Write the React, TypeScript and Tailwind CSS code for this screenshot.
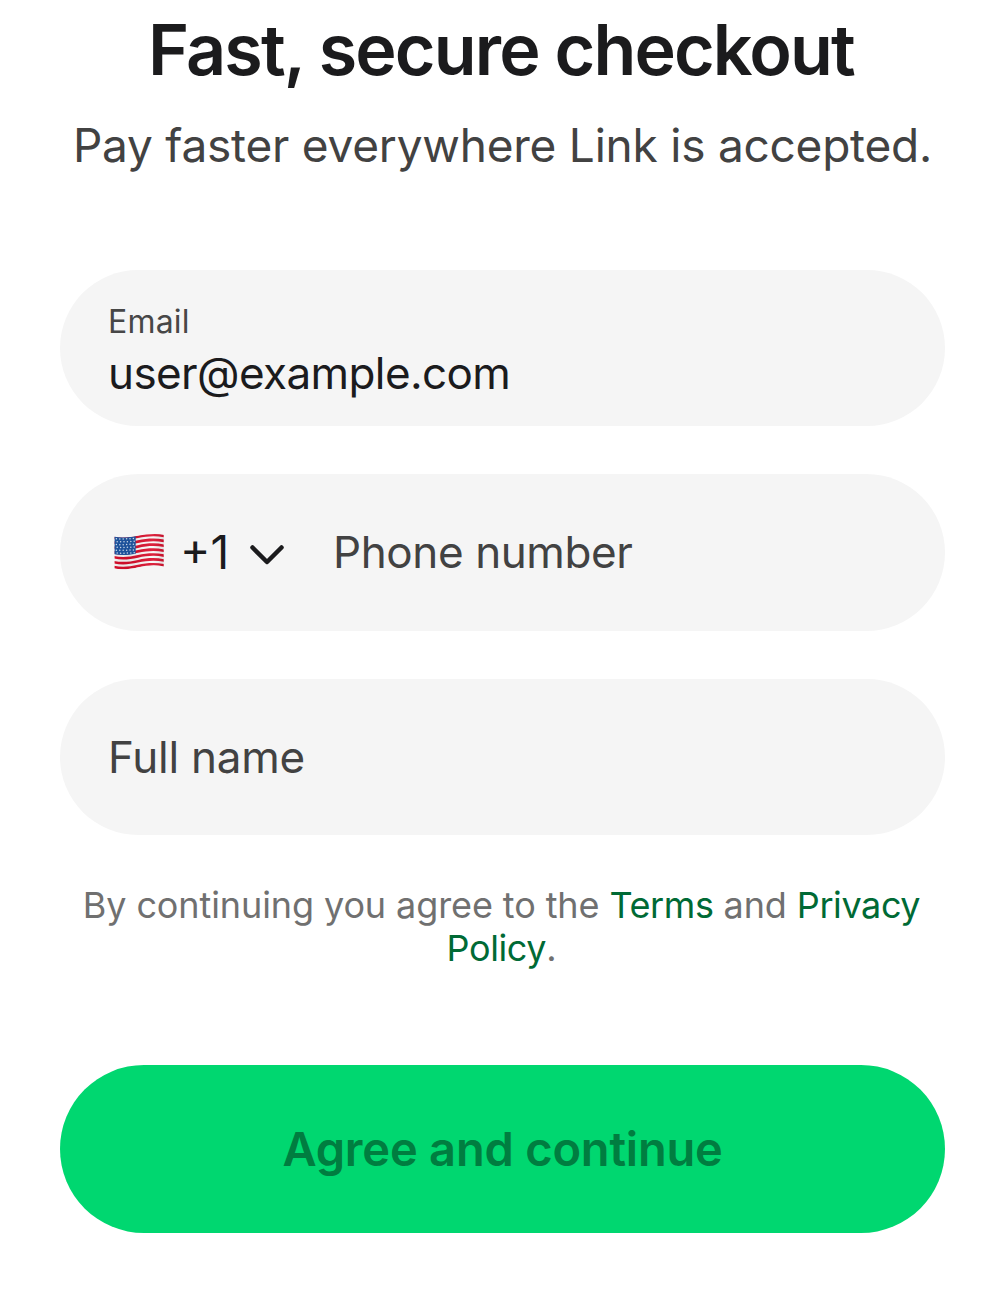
import React from "react";

const stripes = [0, 1, 2, 3, 4, 5, 6];
const six = [0, 1, 2, 3, 4, 5];

function Flag() {
  return (
    <svg width="52" height="40" viewBox="0 0 52 40" className="mb-px shrink-0">
      <defs>
        <clipPath id="flag">
          <path d="M1.6 4.8C8 6 16 5.5 25 3.8S43 1.2 50.7 2.8V34.4C43 32.6 34 33.2 25 35.3S8 38 1.6 36.6Z" />
        </clipPath>
        <linearGradient id="shade" x1="0" x2="1">
          <stop offset="0" stopColor="#000" stopOpacity=".04" />
          <stop offset=".3" stopColor="#000" stopOpacity=".07" />
          <stop offset=".75" stopColor="#fff" stopOpacity=".08" />
          <stop offset="1" stopColor="#000" stopOpacity=".12" />
        </linearGradient>
      </defs>
      <g clipPath="url(#flag)">
        <rect width="52" height="40" fill="#f9f7f7" />
        {stripes.map((i) => (
          <path key={i} transform={`translate(0 ${i * 4.9})`} d="M0 4.2C8 6 16 5.5 25 3.4S43 .8 52 2.9V5.5C43 3.5 34 4.1 25 6.1S8 8.7 0 6.8Z" fill="#d90f2c" />
        ))}
        <path d="M0 3.5C8 6 16 5.5 22.7 4V21.8C15 23.2 8 23.6 0 22.2Z" fill="#1f57a4" />
        {six.map((r) =>
          six.map((c) => (
            <circle key={`${r}-${c}`} cx={3.4 + c * 3.4 + (r % 2) * 0.8} cy={7 + r * 2.85 - Math.abs(c - 1.5) * 0.15} r="0.75" fill="#d5e3f4" />
          )),
        )}
        <rect width="52" height="40" fill="url(#shade)" />
      </g>
    </svg>
  );
}

export default function App() {
  return (
    <main className="flex h-[1293px] w-[1005px] flex-col overflow-hidden bg-white px-[60px] font-['Inter',sans-serif]">
      <h1 className="mt-2 h-[84px] whitespace-nowrap pr-[3px] text-center text-[70px] font-semibold leading-[84px] tracking-[-1.85px] text-[#1b1b1d]">Fast, secure checkout</h1>
      <p className="mt-[21px] h-16 whitespace-nowrap text-center text-[46px] leading-[64px] tracking-[-0.23px] text-[#424242]">Pay faster everywhere Link is accepted.</p>
      <div className="mt-[93px] flex flex-col gap-12">
        <div className="flex h-[156px] flex-col justify-center rounded-full bg-[#f5f5f5] px-12 pt-1.5">
          <div className="text-[32px] leading-[44px] tracking-[0.2px] text-[#474747]">Email</div>
          <div className="text-[44px] leading-[58px] tracking-[-0.6px] text-[#1b1b1d]">user@example.com</div>
        </div>
        <div className="flex h-[157px] items-center rounded-full bg-[#f5f5f5] px-[53px] text-[44px]">
          <Flag />
          <span className="ml-[15px] w-[55px] text-[46px] text-[#1b1b1d]">+1</span>
          <svg width="34" height="20" viewBox="0 0 34 20" className="ml-[15px] mt-1" fill="none" stroke="#1b1b1d" strokeWidth="4.5" strokeLinecap="round" strokeLinejoin="round"><path d="M2.5 2.5L17 17L31.5 2.5" /></svg>
          <span className="ml-[49px] pb-0.5 tracking-[-0.4px] text-[#424242]">Phone number</span>
        </div>
        <div className="flex h-[156px] items-center rounded-full bg-[#f5f5f5] px-12 text-[44px] tracking-[-0.25px] text-[#424242]">Full name</div>
      </div>
      <p className="mt-[49px] whitespace-nowrap pr-[2px] text-center text-[36px] leading-[43px] tracking-[-0.1px] text-[#707070]">
        By continuing you agree to the <a className="tracking-[-0.4px] text-[#006a35]">Terms</a> and <a className="tracking-[-0.4px] text-[#006a35]">Privacy<br />Policy</a>.
      </p>
      <button className="mt-[95px] h-[168px] rounded-full bg-[#00d770] text-[47px] font-semibold tracking-[-0.2px] text-[#007d40]">Agree and continue</button>
    </main>
  );
}
